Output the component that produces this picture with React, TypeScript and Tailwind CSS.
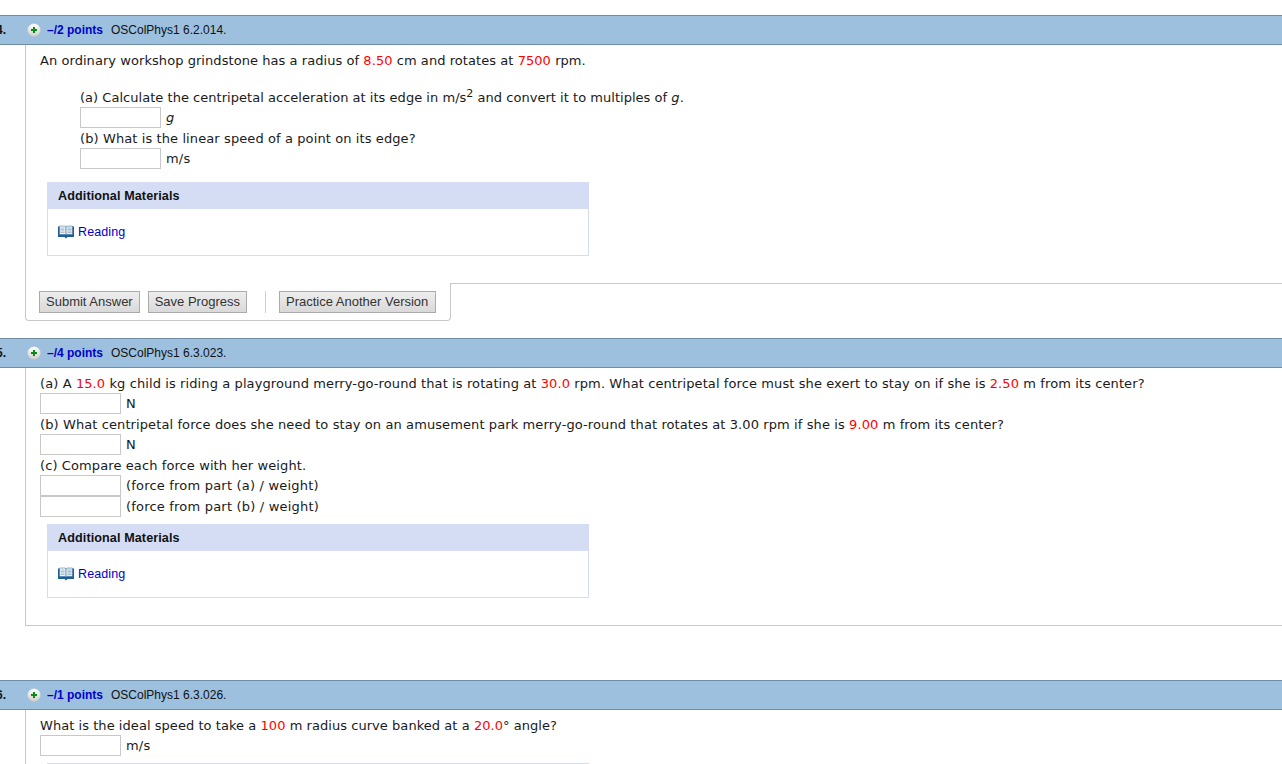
import React from "react";

const verdana = "font-['DejaVu_Sans',sans-serif] text-[13px] leading-[20px] text-[#1a1a1a] tracking-[0.1px]";

function Red({ children }: { children: React.ReactNode }) {
  return <span className="text-[#ff0000]">{children}</span>;
}

function Line({ children, className = "" }: { children: React.ReactNode; className?: string }) {
  return <div className={`h-[20px] pt-px ${className}`}>{children}</div>;
}

function PlusIcon() {
  return (
    <svg width="14" height="14" viewBox="0 0 14 14" className="shrink-0">
      <defs>
        <linearGradient id="plusbg" x1="0" y1="0" x2="0" y2="1">
          <stop offset="0" stopColor="#ffffff" />
          <stop offset="1" stopColor="#cfcfcf" />
        </linearGradient>
      </defs>
      <circle cx="7" cy="7" r="6.5" fill="url(#plusbg)" stroke="#b8c4cf" strokeWidth="0.6" />
      <path d="M7 4v6M4 7h6" stroke="#0b8a1a" strokeWidth="2" />
    </svg>
  );
}

function BookIcon() {
  return (
    <svg width="16" height="14" viewBox="0 0 16 14" className="shrink-0">
      <path d="M0 1.500h7l1 0.500 1-0.500h7v10.500h-6.500l-1.500 1.500-1.500-1.500h-6.500z" fill="#1f5f96" />
      <path d="M1.500 1h5.700l0.800 1v8l-0.800-0.500h-5.700z" fill="#f2f6f8" stroke="#2a6a9e" strokeWidth="0.5" />
      <path d="M14.500 1h-5.700l-0.800 1v8l0.800-0.500h5.700z" fill="#e3ebf0" stroke="#2a6a9e" strokeWidth="0.5" />
      <path d="M2.500 3h4M2.500 4.500h4M2.500 6h4M2.500 7.500h4M9.500 3h4M9.500 4.500h4M9.500 6h4M9.500 7.500h4" stroke="#93a9bb" strokeWidth="0.7" />
    </svg>
  );
}

function Header({ num, points, code }: { num: string; points: string; code: string }) {
  return (
    <div className="flex h-[30px] items-center border-y border-[#6f8ca5] bg-[#9dc0de] font-['Liberation_Sans',sans-serif] text-[12px] text-[#111]">
      <span className="ml-[-4px] w-[31px] shrink-0 font-bold">{num}</span>
      <PlusIcon />
      <span className="ml-[6px] font-bold text-[#0000cc]">{points}</span>
      <span className="ml-[8px]">{code}</span>
    </div>
  );
}

function Answer({ unit }: { unit: React.ReactNode }) {
  return (
    <div className="flex h-[21px] items-center">
      <div className="h-[21px] w-[81px] shrink-0 border border-[#c8c8c8] bg-white" />
      <span className="ml-[5px] tracking-[0.2px]">{unit}</span>
    </div>
  );
}

function Materials({ className }: { className: string }) {
  return (
    <div className={`h-[74px] w-[542px] border border-t-0 border-[#d5ddf5] ${className}`}>
      <div className="-mx-px flex h-[27px] items-center bg-[#d5ddf5] pl-[11px] font-['Liberation_Sans',sans-serif] text-[12.6px] font-bold text-[#111]">
        Additional Materials
      </div>
      <div className="mt-[14px] flex items-center gap-[4px] pl-[10px] font-['Liberation_Sans',sans-serif] text-[12.5px] leading-[18px] text-[#0000cc]">
        <BookIcon />
        <span>Reading</span>
      </div>
    </div>
  );
}

function Button({ children, className = "pr-[6px]" }: { children: React.ReactNode; className?: string }) {
  return (
    <div className={`flex h-[22px] items-center border border-[#aaaaaa] bg-gradient-to-b from-[#eeeeee] to-[#d9d9d9] pl-[6px] font-['Liberation_Sans',sans-serif] text-[13px] text-[#333] ${className}`}>
      {children}
    </div>
  );
}

export default function App() {
  return (
    <div className="h-[764px] w-[1282px] overflow-hidden bg-white pt-[15px]">
      <Header num="4." points="–/2 points" code="OSColPhys1 6.2.014." />
      <div className={`ml-[25px] border-l border-[#c8c8c8] ${verdana}`}>
        <div className="pl-[14px] pt-[5px]">
          <Line className="tracking-[0.06px]">An ordinary workshop grindstone has a radius of <Red>8.50</Red> cm and rotates at <Red>7500</Red> rpm.</Line>
        </div>
        <div className="pl-[54px] pt-[17px]">
          <Line className="tracking-[0.03px]">(a) Calculate the centripetal acceleration at its edge in m/s<sup className="text-[11px] leading-[0]">2</sup> and convert it to multiples of <i>g</i>.</Line>
          <Answer unit={<i>g</i>} />
          <Line>(b) What is the linear speed of a point on its edge?</Line>
          <Answer unit="m/s" />
        </div>
        <Materials className="ml-[21px] mt-[13px]" />
        <div className="h-[27px]" />
      </div>
      <div className="ml-[25px] flex">
        <div className="flex h-[38px] w-[426px] shrink-0 items-start gap-[8px] rounded-b-[4px] border-b border-l border-r border-[#c8c8c8] pl-[13px] pt-[8px]">
          <Button>Submit Answer</Button>
          <Button>Save Progress</Button>
          <div className="ml-[10px] mr-[5px] h-[22px] w-px bg-[#d0d0d0]" />
          <Button className="pr-[7px]">Practice Another Version</Button>
        </div>
        <div className="flex-1 border-t border-[#c8c8c8]" />
      </div>

      <div className="h-[17px]" />
      <Header num="5." points="–/4 points" code="OSColPhys1 6.3.023." />
      <div className={`ml-[25px] h-[258px] border-b border-l border-[#c8c8c8] ${verdana}`}>
        <div className="pl-[14px] pt-[5px]">
          <Line>(a) A <Red>15.0</Red> kg child is riding a playground merry-go-round that is rotating at <Red>30.0</Red> rpm. What centripetal force must she exert to stay on if she is <Red>2.50</Red> m from its center?</Line>
          <Answer unit="N" />
          <Line>(b) What centripetal force does she need to stay on an amusement park merry-go-round that rotates at 3.00 rpm if she is <Red>9.00</Red> m from its center?</Line>
          <Answer unit="N" />
          <Line>(c) Compare each force with her weight.</Line>
          <Answer unit="(force from part (a) / weight)" />
          <Answer unit="(force from part (b) / weight)" />
        </div>
        <Materials className="ml-[21px] mt-[7px]" />
      </div>

      <div className="h-[54px]" />
      <Header num="6." points="–/1 points" code="OSColPhys1 6.3.026." />
      <div className={`ml-[25px] h-[60px] border-l border-[#c8c8c8] ${verdana}`}>
        <div className="pl-[14px] pt-[5px]">
          <Line className="tracking-[0.05px]">What is the ideal speed to take a <Red>100</Red> m radius curve banked at a <Red>20.0</Red>° angle?</Line>
          <Answer unit="m/s" />
        </div>
        <Materials className="ml-[21px] mt-[7px]" />
      </div>
    </div>
  );
}
